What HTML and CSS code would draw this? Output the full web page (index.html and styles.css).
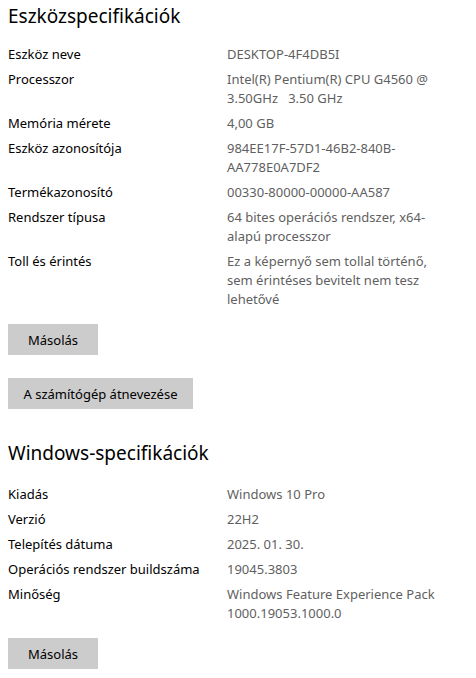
FILE: index.html
```html
<!DOCTYPE html>
<html lang="hu">
<head>
<meta charset="utf-8">
<link rel="stylesheet" href="styles.css">
</head>
<body>
<section class="section">
  <h2 class="title">Eszközspecifikációk</h2>
  <dl class="specs">
    <dt>Eszköz neve</dt><dd>DESKTOP-4F4DB5I</dd>
    <dt>Processzor</dt><dd>Intel(R) Pentium(R) CPU G4560 @<br><span class="pre">3.50GHz   3.50 GHz</span></dd>
    <dt>Memória mérete</dt><dd>4,00 GB</dd>
    <dt>Eszköz azonosítója</dt><dd>984EE17F-57D1-46B2-840B-<br>AA778E0A7DF2</dd>
    <dt>Termékazonosító</dt><dd>00330-80000-00000-AA587</dd>
    <dt>Rendszer típusa</dt><dd>64 bites operációs rendszer, x64-<br>alapú processzor</dd>
    <dt>Toll és érintés</dt><dd>Ez a képernyő sem tollal történő,<br>sem érintéses bevitelt nem tesz<br>lehetővé</dd>
  </dl>
  <div class="actions">
    <button class="btn btn-copy">Másolás</button>
    <button class="btn btn-rename">A számítógép átnevezése</button>
  </div>
</section>
<section class="section section-win">
  <h2 class="title">Windows-specifikációk</h2>
  <dl class="specs specs-win">
    <dt>Kiadás</dt><dd>Windows 10 Pro</dd>
    <dt>Verzió</dt><dd>22H2</dd>
    <dt>Telepítés dátuma</dt><dd>2025. 01. 30.</dd>
    <dt>Operációs rendszer buildszáma</dt><dd>19045.3803</dd>
    <dt>Minőség</dt><dd>Windows Feature Experience Pack<br>1000.19053.1000.0</dd>
  </dl>
  <div class="actions">
    <button class="btn btn-copy">Másolás</button>
  </div>
</section>
</body>
</html>
```

FILE: styles.css
```css
html, body {
  margin: 0;
  padding: 0;
  background: #ffffff;
}
body {
  font-family: "Noto Sans", "Open Sans", sans-serif;
  color: #000000;
  padding: 2px 8px 0 8px;
}
.title {
  margin: 0;
  font-weight: 400;
  font-size: 19px;
  line-height: 28px;
  color: #000;
}
.specs {
  display: grid;
  grid-template-columns: 219px 1fr;
  row-gap: 6px;
  margin: 15px 0 0 0;
  font-size: 13px;
  line-height: 19px;
}
.specs-win {
  margin-top: 18px;
}
.specs dt {
  margin: 0;
  color: #000;
}
.specs dd {
  margin: 0;
  color: #5f5f5f;
}
.pre {
  white-space: pre;
}
.actions {
  display: flex;
  flex-direction: column;
  align-items: flex-start;
  gap: 23px;
  margin-top: 15px;
}
.btn {
  font-family: inherit;
  font-size: 13px;
  color: #000;
  background: #cccccc;
  border: none;
  border-radius: 0;
  height: 31px;
  padding: 0 14px;
  margin: 0;
}
.btn-copy {
  width: 90px;
}
.btn-rename {
  width: 185px;
}
.section-win {
  margin-top: 30px;
}
```
